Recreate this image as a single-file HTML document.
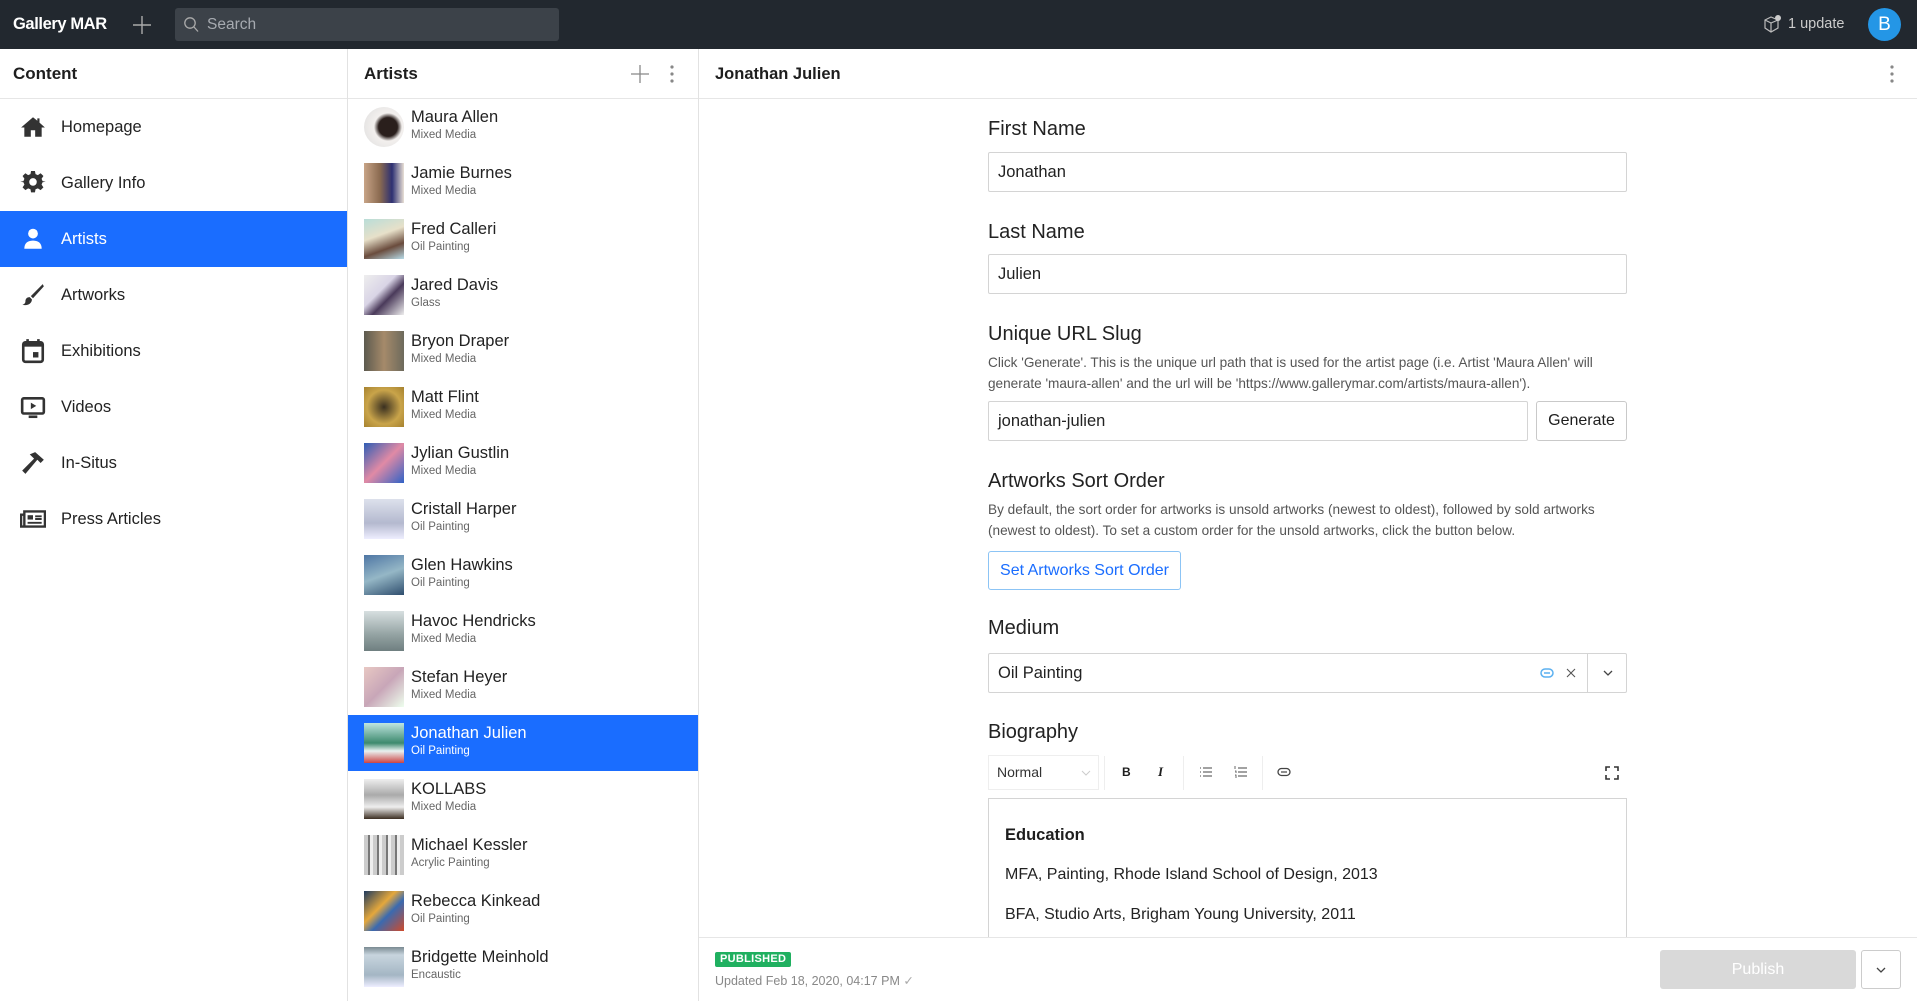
<!DOCTYPE html>
<html><head><meta charset="utf-8">
<style>
*{box-sizing:border-box;margin:0;padding:0}
body{width:1917px;height:1001px;overflow:hidden;font-family:"Liberation Sans",sans-serif;background:#fff;color:#1e1e1e;position:relative}
.abs{position:absolute}
#top{left:0;top:0;width:1917px;height:49px;background:#22282f}
#sidebar{left:0;top:49px;width:348px;height:952px;border-right:1px solid #e2e2e2}
#list{left:348px;top:49px;width:351px;height:952px;border-right:1px solid #e2e2e2}
.hdr{height:50px;border-bottom:1px solid #e6e6e6;font-weight:bold;font-size:17px;line-height:50px;padding-left:13px}
.nav{height:56px;display:flex;align-items:center;font-size:16.5px;color:#222}
.nav svg{margin-left:20px;width:26px;height:26px;margin-right:15px}
.nav.act{background:#1a6dff;color:#fff}
.row{height:56px;position:relative}
.row .th{position:absolute;left:16px;top:8px;width:40px;height:40px}
.row .n{position:absolute;left:63px;top:9px;font-size:16.5px;color:#222}
.row .m{position:absolute;left:63px;top:30px;font-size:11.5px;color:#666}
.row.act{background:#1a6dff}.row.act .n,.row.act .m{color:#fff}
.lbl{position:absolute;left:988px;font-size:20px;color:#222}
.inp{position:absolute;left:988px;width:639px;height:40px;border:1px solid #d4d4d4;border-radius:2px;font-size:16.5px;line-height:38px;padding-left:9px;color:#222}
.desc{position:absolute;left:988px;width:650px;font-size:13.6px;line-height:21px;color:#555}
</style></head><body>
<div id="top" class="abs">
  <div class="abs" style="left:13px;top:15px;color:#fff;font-size:16.5px;font-weight:bold;letter-spacing:-0.4px">Gallery MAR</div>
  <svg class="abs" style="left:132px;top:15px" width="20" height="20"><path d="M10 1V19M1 10H19" stroke="#aaa" stroke-width="1.4"/></svg>
  <div class="abs" style="left:175px;top:8px;width:384px;height:33px;background:#3c4249;border-radius:3px"></div>
  <svg class="abs" style="left:183px;top:16px" width="16" height="18"><circle cx="7" cy="7" r="5.2" stroke="#aaa" stroke-width="1.3" fill="none"/><path d="M11 11L15 15.5" stroke="#aaa" stroke-width="1.3"/></svg>
  <div class="abs" style="left:207px;top:16px;color:#a6aab0;font-size:15.5px">Search</div>
  <svg class="abs" style="left:1762px;top:14px" width="20" height="20"><path d="M3 6L9 3L16 6V14L9 18L3 14Z M3 6L9 9L16 6 M9 9V18" stroke="#bbb" stroke-width="1.2" fill="none"/><circle cx="16" cy="4" r="3" fill="#ccc"/></svg>
  <div class="abs" style="left:1788px;top:16px;color:#ccc;font-size:14.5px">1 update</div>
  <div class="abs" style="left:1868px;top:8px;width:33px;height:33px;border-radius:50%;background:#2496e6;color:#fff;font-size:19px;text-align:center;line-height:33px">B</div>
</div>

<div id="sidebar" class="abs">
  <div class="hdr">Content</div>
  <div class="nav"><svg viewBox="0 0 24 24"><path d="M12 3L1 12.5H4V21H10V15H14V21H20V12.5H23L18 8V4H16V6.2Z" fill="#333"/></svg>Homepage</div>
  <div class="nav"><svg viewBox="0 0 24 24"><path d="M10 1H14L14.6 4.2 17 5.2 19.8 3.3 22.7 6.2 20.8 9 21.8 11.4 25 12V12L21.8 12.6 20.8 15 22.7 17.8 19.8 20.7 17 18.8 14.6 19.8 14 23H10L9.4 19.8 7 18.8 4.2 20.7 1.3 17.8 3.2 15 2.2 12.6 -1 12 2.2 11.4 3.2 9 1.3 6.2 4.2 3.3 7 5.2 9.4 4.2Z" fill="#333" transform="translate(1.2 0) scale(0.9)"/><circle cx="12" cy="11" r="3.5" fill="#fff"/></svg>Gallery Info</div>
  <div class="nav act"><svg viewBox="0 0 24 24"><circle cx="12" cy="7" r="4.5" fill="#fff"/><path d="M4 21C4 15 8 13.5 12 13.5S20 15 20 21Z" fill="#fff"/></svg>Artists</div>
  <div class="nav"><svg viewBox="0 0 24 24"><path d="M21 2L10 13L12 15L22 4Z" fill="#333"/><path d="M9 14C6 14 5 16 5 18S3 21 2 21C5 22 11 21 11 16Z" fill="#333"/></svg>Artworks</div>
  <div class="nav"><svg viewBox="0 0 24 24"><path d="M7 1V4M17 1V4" stroke="#333" stroke-width="2.4"/><rect x="3" y="4" width="18" height="18" rx="2" fill="none" stroke="#333" stroke-width="2.4"/><rect x="3" y="4" width="18" height="4" fill="#333"/><rect x="12" y="13" width="5" height="5" fill="#333"/></svg>Exhibitions</div>
  <div class="nav"><svg viewBox="0 0 24 24"><rect x="2" y="4" width="20" height="14" rx="1.5" fill="none" stroke="#333" stroke-width="2.4"/><path d="M10 8V14L15 11Z" fill="#333"/><path d="M8 21H16" stroke="#333" stroke-width="2.4"/></svg>Videos</div>
  <div class="nav"><svg viewBox="0 0 24 24"><path d="M9 4L14 2L22 9L19 12L16 9L5 22L2 19L13 8Z" fill="#333"/></svg>In-Situs</div>
  <div class="nav"><svg viewBox="0 0 24 24"><path d="M4 5H23V19H4Z M4 8H1V19H4" fill="none" stroke="#333" stroke-width="2.2"/><rect x="7" y="8.5" width="5" height="4" fill="#333"/><path d="M14 9.5H20M14 12H20M7 15.5H20" stroke="#333" stroke-width="1.8"/></svg>Press Articles</div>
</div>

<div id="list" class="abs">
  <div class="hdr" style="padding-left:16px">Artists
    <svg class="abs" style="left:282px;top:15px" width="20" height="20"><path d="M10 1V19M1 10H19" stroke="#888" stroke-width="1.3"/></svg>
    <svg class="abs" style="left:321px;top:15px" width="6" height="20"><circle cx="3" cy="3" r="1.6" fill="#888"/><circle cx="3" cy="10" r="1.6" fill="#888"/><circle cx="3" cy="17" r="1.6" fill="#888"/></svg>
  </div>
  <div class="row"><div class="th" style="border-radius:50%;background:radial-gradient(circle at 60% 50%,#2a1f1c 0 30%,#f3f0ee 45%,#ddd 100%)"></div><div class="n">Maura Allen</div><div class="m">Mixed Media</div></div>
  <div class="row"><div class="th" style="background:linear-gradient(90deg,#c8a487,#8a6a50 40%,#2d3072 70%,#e9e0d5)"></div><div class="n">Jamie Burnes</div><div class="m">Mixed Media</div></div>
  <div class="row"><div class="th" style="background:linear-gradient(160deg,#b9ddd8,#e7e0c9 40%,#6a4c3d 70%,#b7dbe8)"></div><div class="n">Fred Calleri</div><div class="m">Oil Painting</div></div>
  <div class="row"><div class="th" style="background:linear-gradient(135deg,#eee,#d9d4e6 40%,#4a3a5a 60%,#eee)"></div><div class="n">Jared Davis</div><div class="m">Glass</div></div>
  <div class="row"><div class="th" style="background:linear-gradient(90deg,#5c5a4f,#a58a6a 50%,#6d6a5c)"></div><div class="n">Bryon Draper</div><div class="m">Mixed Media</div></div>
  <div class="row"><div class="th" style="background:radial-gradient(circle,#3a3020,#c9a44a 60%,#a6822f)"></div><div class="n">Matt Flint</div><div class="m">Mixed Media</div></div>
  <div class="row"><div class="th" style="background:linear-gradient(135deg,#2e5db5,#e08aa5 50%,#3062c6)"></div><div class="n">Jylian Gustlin</div><div class="m">Mixed Media</div></div>
  <div class="row"><div class="th" style="background:linear-gradient(180deg,#dde1ec,#b4b9cf 60%,#eef)"></div><div class="n">Cristall Harper</div><div class="m">Oil Painting</div></div>
  <div class="row"><div class="th" style="background:linear-gradient(160deg,#4e76a4,#95b7c6 50%,#2f4e6e)"></div><div class="n">Glen Hawkins</div><div class="m">Oil Painting</div></div>
  <div class="row"><div class="th" style="background:linear-gradient(180deg,#d7dfe0,#93a2a2 60%,#6f7f80)"></div><div class="n">Havoc Hendricks</div><div class="m">Mixed Media</div></div>
  <div class="row"><div class="th" style="background:linear-gradient(135deg,#e8c8c3,#c8a6b8 50%,#efe)"></div><div class="n">Stefan Heyer</div><div class="m">Mixed Media</div></div>
  <div class="row act"><div class="th" style="background:linear-gradient(180deg,#bfe5e0,#3d8a6e 50%,#e9f1f0 70%,#c44)"></div><div class="n">Jonathan Julien</div><div class="m">Oil Painting</div></div>
  <div class="row"><div class="th" style="background:linear-gradient(180deg,#eee,#aaa 40%,#eee 70%,#3c2e22)"></div><div class="n">KOLLABS</div><div class="m">Mixed Media</div></div>
  <div class="row"><div class="th" style="background:repeating-linear-gradient(90deg,#ccc 0 4px,#777 4px 6px,#eee 6px 9px)"></div><div class="n">Michael Kessler</div><div class="m">Acrylic Painting</div></div>
  <div class="row"><div class="th" style="background:linear-gradient(135deg,#1e3a5e,#e5a83c 40%,#3a6ab0 60%,#d04a2a)"></div><div class="n">Rebecca Kinkead</div><div class="m">Oil Painting</div></div>
  <div class="row"><div class="th" style="background:linear-gradient(180deg,#7a8a92,#c8d5de 20%,#a4b6c4 70%,#eef)"></div><div class="n">Bridgette Meinhold</div><div class="m">Encaustic</div></div>
</div>

<div class="abs" style="left:699px;top:49px;width:1218px;height:50px;border-bottom:1px solid #e6e6e6">
  <div class="abs" style="left:16px;top:16px;font-weight:bold;font-size:16.5px">Jonathan Julien</div>
  <svg class="abs" style="left:1190px;top:15px" width="6" height="20"><circle cx="3" cy="3" r="1.6" fill="#888"/><circle cx="3" cy="10" r="1.6" fill="#888"/><circle cx="3" cy="17" r="1.6" fill="#888"/></svg>
</div>

<div class="lbl" style="top:118px">First Name</div>
<div class="inp" style="top:152px">Jonathan</div>
<div class="lbl" style="top:221px">Last Name</div>
<div class="inp" style="top:254px">Julien</div>
<div class="lbl" style="top:323px">Unique URL Slug</div>
<div class="desc" style="top:352px">Click 'Generate'. This is the unique url path that is used for the artist page (i.e. Artist 'Maura Allen' will generate 'maura-allen' and the url will be 'https://www.gallerymar.com/artists/maura-allen').</div>
<div class="inp" style="top:401px;width:540px">jonathan-julien</div>
<div class="abs" style="left:1536px;top:401px;width:91px;height:40px;border:1px solid #c9c9c9;border-radius:3px;font-size:16px;text-align:center;line-height:38px">Generate</div>
<div class="lbl" style="top:470px">Artworks Sort Order</div>
<div class="desc" style="top:499px">By default, the sort order for artworks is unsold artworks (newest to oldest), followed by sold artworks (newest to oldest). To set a custom order for the unsold artworks, click the button below.</div>
<div class="abs" style="left:988px;top:551px;width:193px;height:39px;border:1px solid #8cc4f5;border-radius:3px;color:#1a6dff;font-size:16px;text-align:center;line-height:37px">Set Artworks Sort Order</div>
<div class="lbl" style="top:617px">Medium</div>
<div class="inp" style="top:653px">Oil Painting</div>
<svg class="abs" style="left:1540px;top:667px" width="14" height="12"><rect x="1" y="2" width="12" height="8" rx="4" fill="none" stroke="#5bb0f0" stroke-width="1.5"/><path d="M4 6H10" stroke="#5bb0f0" stroke-width="1.5"/></svg>
<svg class="abs" style="left:1566px;top:668px" width="10" height="10"><path d="M1 1L9 9M9 1L1 9" stroke="#555" stroke-width="1.1"/></svg>
<div class="abs" style="left:1587px;top:654px;width:1px;height:38px;background:#d4d4d4"></div>
<svg class="abs" style="left:1602px;top:668px" width="12" height="10"><path d="M2 3L6 7L10 3" stroke="#444" stroke-width="1.3" fill="none"/></svg>
<div class="lbl" style="top:721px">Biography</div>
<div class="abs" style="left:988px;top:755px;width:111px;height:35px;border:1px solid #eee;font-size:14px;line-height:33px;padding-left:8px;color:#333">Normal<svg class="abs" style="left:92px;top:13px" width="10" height="8"><path d="M1 2L5 6L9 2" stroke="#ccc" fill="none"/></svg></div>
<div class="abs" style="left:1104px;top:756px;width:1px;height:34px;background:#eee"></div>
<div class="abs" style="left:1183px;top:756px;width:1px;height:34px;background:#eee"></div>
<div class="abs" style="left:1262px;top:756px;width:1px;height:34px;background:#eee"></div>
<div class="abs" style="left:1122px;top:765px;font-size:12px;font-weight:bold">B</div>
<div class="abs" style="left:1158px;top:764px;font-size:13px;font-style:italic;font-weight:bold;font-family:'Liberation Serif',serif">I</div>
<svg class="abs" style="left:1199px;top:765px" width="14" height="14"><path d="M4 3H13M4 7H13M4 11H13" stroke="#444"/><path d="M1 3H2M1 7H2M1 11H2" stroke="#444"/></svg>
<svg class="abs" style="left:1234px;top:765px" width="14" height="14"><path d="M4 3H13M4 7H13M4 11H13" stroke="#444"/><path d="M1 1V4M1 6H2V8M1 10H2V13" stroke="#444" stroke-width="0.8" fill="none"/></svg>
<svg class="abs" style="left:1277px;top:767px" width="14" height="10"><rect x="1" y="1.5" width="12" height="7" rx="3.5" fill="none" stroke="#444" stroke-width="1.3"/><path d="M4 5H10" stroke="#444" stroke-width="1.2"/></svg>
<svg class="abs" style="left:1605px;top:766px" width="14" height="14"><path d="M1 5V1H5M9 1H13V5M13 9V13H9M5 13H1V9" stroke="#333" stroke-width="1.6" fill="none"/></svg>
<div class="abs" style="left:988px;top:798px;width:639px;height:150px;border:1px solid #d4d4d4;border-bottom:none"></div>
<div class="abs" style="left:1005px;top:826px;font-size:16.5px;font-weight:bold">Education</div>
<div class="abs" style="left:1005px;top:866px;font-size:16px;color:#222">MFA, Painting, Rhode Island School of Design, 2013</div>
<div class="abs" style="left:1005px;top:906px;font-size:16px;color:#222">BFA, Studio Arts, Brigham Young University, 2011</div>

<div class="abs" style="left:699px;top:937px;width:1218px;height:64px;background:#fff;border-top:1px solid #e6e6e6">
  <div class="abs" style="left:16px;top:14px;height:15px;padding:0 5px;background:#20b060;color:#fff;font-size:11px;font-weight:bold;line-height:15px;border-radius:2px;letter-spacing:0.3px">PUBLISHED</div>
  <div class="abs" style="left:16px;top:35px;font-size:12.5px;color:#888">Updated Feb 18, 2020, 04:17 PM <span style="color:#aaa">&#10003;</span></div>
  <div class="abs" style="left:961px;top:12px;width:196px;height:39px;background:#d9d9d9;border-radius:3px;color:#fff;font-size:16px;text-align:center;line-height:39px">Publish</div>
  <div class="abs" style="left:1162px;top:12px;width:40px;height:39px;border:1px solid #ccc;border-radius:3px"><svg class="abs" style="left:13px;top:14px" width="12" height="10"><path d="M2 3L6 7L10 3" stroke="#444" stroke-width="1.3" fill="none"/></svg></div>
</div>
</body></html>
